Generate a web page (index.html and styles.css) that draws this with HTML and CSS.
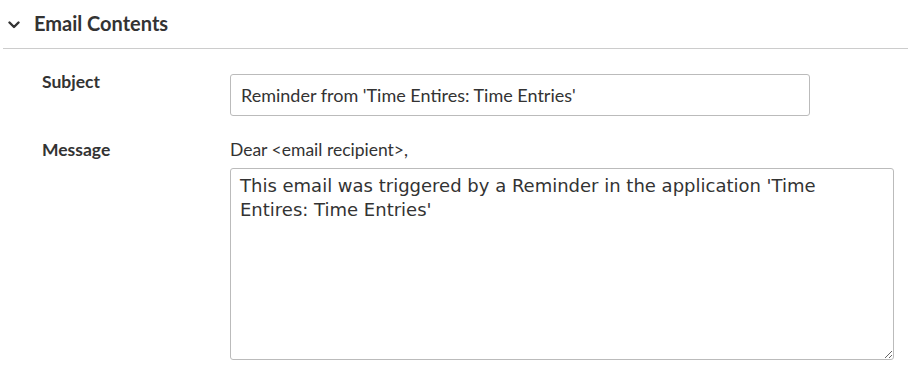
FILE: index.html
```html
<!DOCTYPE html>
<html>
<head>
<meta charset="utf-8">
<link rel="stylesheet" href="styles.css">
</head>
<body>
<section class="panel">
  <header class="panel-header">
    <svg class="chevron" width="12" height="8" viewBox="0 0 12 8"><path d="M1.5 1.5 L6 6 L10.5 1.5" fill="none" stroke="#333" stroke-width="2.4" stroke-linecap="round" stroke-linejoin="round"/></svg>
    <h2 class="panel-title">Email Contents</h2>
  </header>
  <div class="panel-body">
    <div class="row row-subject">
      <div class="label">Subject</div>
      <div class="field">
        <input class="subject-input" type="text" value="Reminder from 'Time Entires: Time Entries'">
      </div>
    </div>
    <div class="row row-message">
      <div class="label">Message</div>
      <div class="field">
        <div class="greeting">Dear &lt;email recipient&gt;,</div>
        <textarea class="message-input">This email was triggered by a Reminder in the application 'Time Entires: Time Entries'</textarea>
      </div>
    </div>
  </div>
</section>
</body>
</html>
```
FILE: styles.css
```css
html, body {
  margin: 0;
  padding: 0;
  background: #fff;
}
body {
  font-family: Lato, "Liberation Sans", sans-serif;
  color: #333;
}
.panel {
  width: 908px;
}
.panel-header {
  display: flex;
  align-items: center;
  height: 49px;
  margin-left: 3px;
  border-bottom: 1px solid #ccc;
  padding-left: 5px;
  box-sizing: border-box;
}
.chevron {
  display: block;
  margin-right: 14px;
  margin-top: 2px;
}
.panel-title {
  margin: 0;
  font-size: 20px;
  font-weight: 700;
  color: #333;
  padding-bottom: 2px;
}
.panel-body {
  padding-top: 25px;
}
.row {
  display: flex;
}
.label {
  width: 188px;
  padding-left: 42px;
  font-size: 17.5px;
  font-weight: 700;
  color: #333;
}
.row-subject .label {
  margin-top: -3px;
}
.row-message .label {
  margin-top: -2px;
}
.field {
  flex: 0 0 auto;
}
.subject-input {
  box-sizing: border-box;
  width: 580px;
  height: 42px;
  border: 1px solid #bbb;
  border-radius: 3px;
  padding: 0 10px;
  font-family: Lato, "Liberation Sans", sans-serif;
  font-size: 18px;
  color: #333;
  outline: none;
}
.row-message {
  margin-top: 25px;
}
.greeting {
  font-size: 17.5px;
  color: #333;
  height: 27px;
  line-height: 18px;
}
.message-input {
  display: block;
  box-sizing: border-box;
  width: 664px;
  height: 192px;
  border: 1px solid #bbb;
  border-radius: 3px;
  padding: 5px 9px;
  font-family: "DejaVu Sans", Verdana, sans-serif;
  font-size: 18px;
  line-height: 24px;
  color: #333;
  resize: both;
  outline: none;
}
```
